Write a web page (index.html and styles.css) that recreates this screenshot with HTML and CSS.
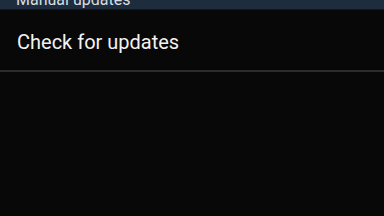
FILE: index.html
```html
<!DOCTYPE html>
<html lang="en">
<head>
    <meta charset="UTF-8">
    <meta name="viewport" content="width=device-width, initial-scale=1.0">
    <title>Software update</title>
    <link rel="stylesheet" href="styles.css">
</head>
<body>
    <!-- Cabeçalho da secção (cortado no topo) -->
    <div class="section-header">
        <span>Manual updates</span>
    </div>

    <!-- Item da lista -->
    <div class="list-item">
        <span>Check for updates</span>
    </div>
</body>
</html>
```

FILE: styles.css
```css
body {
    font-family: Roboto, "Noto Sans", sans-serif;
    background-color: #080808;
    color: #f2f2f2;
    margin: 0;
    padding: 0;
    width: 384px;
    height: 216px;
    overflow: hidden;
}
/* Cabeçalho azul escuro */
.section-header {
    height: 9px;
    background-color: #1e2d3e;
    border-bottom: 1px solid #101820;
    padding-left: 16px;
    overflow: hidden;
}
.section-header span {
    display: block;
    font-size: 16px;
    line-height: 16px;
    margin-top: -8.5px;
    color: #d8dde2;
}
/* Item da lista */
.list-item {
    height: 57px;
    padding-top: 3px;
    display: flex;
    align-items: center;
    padding-left: 17px;
    border-bottom: 2px solid #2c2c2c;
}
.list-item span {
    font-size: 20px;
}
```
